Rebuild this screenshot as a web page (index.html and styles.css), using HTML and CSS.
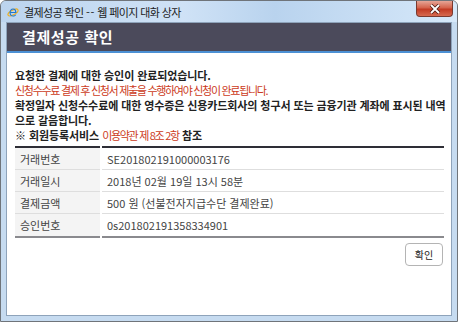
FILE: index.html
```html
<!DOCTYPE html>
<html lang="ko">

<head>
    <meta charset="UTF-8">
    <title>결제성공 확인</title>
    <link rel="stylesheet" href="styles.css">
</head>

<body>
    <div class="window">
        <!-- Title bar -->
        <div class="titlebar">
            <svg class="ie-icon" width="12" height="12" viewBox="0 0 12 12">
                <ellipse cx="6" cy="6.5" rx="5.6" ry="2.4" fill="none" stroke="#f0b020" stroke-width="1.2" transform="rotate(-30 6 6.5)"/>
                <path d="M9.4 7H3.6C3.7 8.6 4.8 9.6 6.2 9.6C7.3 9.6 8 9.1 8.5 8.4H9.3C8.7 9.8 7.6 10.6 6.1 10.6C4 10.6 2.5 9 2.5 6.6C2.5 4.2 4 2.5 6.1 2.5C8.1 2.5 9.4 4 9.4 6.3V7ZM3.7 6H8.2C8.1 4.6 7.3 3.5 6 3.5C4.7 3.5 3.8 4.5 3.7 6Z" fill="#1f78d0"/>
            </svg>
            <span class="title">결제성공 확인 <span class="dash">--</span> 웹 페이지 대화 상자</span>
            <div class="close">
                <svg width="12" height="10" viewBox="0 0 12 10">
                    <path d="M2 1L10 9M10 1L2 9" stroke="#4a1a12" stroke-width="3.4"/>
                    <path d="M2 1L10 9M10 1L2 9" stroke="#fff" stroke-width="1.8"/>
                </svg>
            </div>
        </div>

        <div class="content">
            <div class="header">결제성공 확인</div>

            <div class="body">
                <p class="msg">
                    <b>요청한 결제에 대한 승인이 완료되었습니다.</b><br>
                    <span class="red">신청수수료 결제 후 신청서 제출을 수행하여야 신청이 완료됩니다.</span><br>
                    <b>확정일자 신청수수료에 대한 영수증은 신용카드회사의 청구서 또는 금융기관 계좌에 표시된 내역</b><br>
                    <b>으로 갈음합니다.</b><br>
                    <b>※ 회원등록서비스</b> <span class="red">이용약관 제 8조 2항</span> <b>참조</b>
                </p>

                <table class="info">
                    <tr>
                        <th>거래번호</th>
                        <td>SE201802191000003176</td>
                    </tr>
                    <tr>
                        <th>거래일시</th>
                        <td>2018년 02월 19일 13시 58분</td>
                    </tr>
                    <tr>
                        <th>결제금액</th>
                        <td>500 원 (선불전자지급수단 결제완료)</td>
                    </tr>
                    <tr>
                        <th>승인번호</th>
                        <td>0s201802191358334901</td>
                    </tr>
                </table>

                <div class="actions">
                    <button class="btn">확인</button>
                </div>
            </div>
        </div>
    </div>
</body>

</html>
```

FILE: styles.css
```css
body {
    margin: 0;
    font-family: "Noto Sans CJK KR", "Noto Sans", sans-serif;
}

.window {
    width: 458px;
    height: 322px;
    box-sizing: border-box;
    border: 1px solid #6f747a;
    border-radius: 6px 6px 0 0;
    background: #c6dbf0;
    padding: 0 5px 5px 5px;
    display: flex;
    flex-direction: column;
}

.titlebar {
    height: 21px;
    flex-shrink: 0;
    display: flex;
    align-items: center;
    margin: 0 -5px;
    padding: 0 0 0 6px;
    background: linear-gradient(90deg, #bcd4ee 0%, #cfe2f6 40%, #b9d3ee 60%, #d6e8f9 100%);
    border-radius: 5px 5px 0 0;
}

.ie-icon {
    margin-top: 1px;
}

.title {
    margin-left: 5px;
    font-size: 11px;
    color: #1b1b1b;
    letter-spacing: -0.6px;
}

.dash {
    letter-spacing: 0.5px;
}

.close {
    margin-left: auto;
    margin-right: 4px;
    align-self: flex-start;
    width: 37px;
    height: 16px;
    box-sizing: border-box;
    border: 1px solid #7a3a30;
    border-top: none;
    border-radius: 0 0 4px 4px;
    background: linear-gradient(#e6a596 0%, #d4634c 45%, #c23b24 55%, #d66a50 100%);
    display: flex;
    align-items: center;
    justify-content: center;
}

.content {
    flex: 1;
    background: #fff;
    border: 1px solid #8ea3ba;
    display: flex;
    flex-direction: column;
}

.header {
    height: 28px;
    line-height: 28px;
    background: #4b4a5b;
    border-bottom: 2px solid #4c90d4;
    color: #fff;
    font-size: 15px;
    font-weight: bold;
    padding-left: 15px;
    letter-spacing: 0.6px;
}

.body {
    padding: 15px 7px 0 8px;
}

.msg {
    margin: 0;
    font-size: 11px;
    line-height: 15px;
    color: #222;
    white-space: nowrap;
}

.msg b {
    font-weight: bold;
    letter-spacing: -0.1px;
}

.red {
    color: #cc3b22;
    letter-spacing: -1.3px;
}

.info {
    width: 100%;
    margin-top: 3px;
    border-collapse: collapse;
    border-top: 2px solid #2e2e36;
    border-bottom: 2px solid #8a8a8e;
    font-size: 11px;
    color: #444;
}

.info th,
.info td {
    height: 21px;
    padding: 0;
    border-bottom: 1px solid #dedede;
    font-weight: normal;
    text-align: left;
}

.info tr:last-child th,
.info tr:last-child td {
    border-bottom: none;
    height: 22px;
}

.info th {
    width: 80px;
    padding-left: 5px;
    background: #f4f4f4;
    border-right: 2px solid #fff;
}

.info td {
    padding-left: 5px;
}

.actions {
    display: flex;
    justify-content: flex-end;
    margin-top: 5px;
    padding-right: 1px;
}

.btn {
    width: 38px;
    height: 23px;
    background: #fff;
    border: 1px solid #b4b4b4;
    border-radius: 4px;
    font-family: "Noto Sans CJK KR", sans-serif;
    font-size: 10px;
    color: #222;
    padding: 0;
}
```
